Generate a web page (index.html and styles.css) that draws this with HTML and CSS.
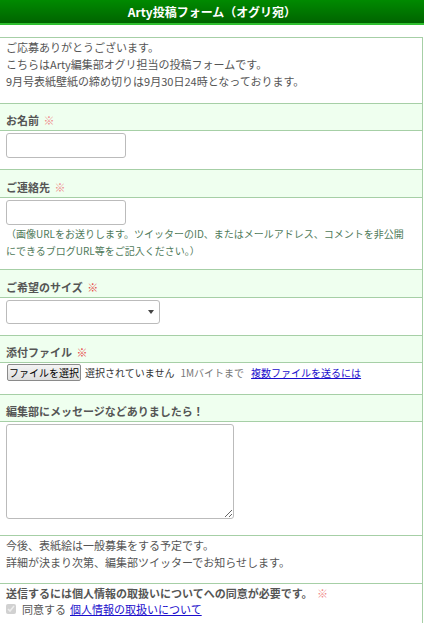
FILE: index.html
```html
<!DOCTYPE html>
<html lang="ja">
<head>
<meta charset="utf-8">
<title>Arty投稿フォーム（オグリ宛）</title>
<link rel="stylesheet" href="styles.css">
</head>
<body>
<h1 class="title">Arty投稿フォーム（オグリ宛）</h1>
<form class="form">
  <div class="cell intro">
    ご応募ありがとうございます。<br>
    こちらはArty編集部オグリ担当の投稿フォームです。<br>
    9月号表紙壁紙の締め切りは9月30日24時となっております。
  </div>
  <div class="cell label">お名前 <span class="req">※</span></div>
  <div class="cell field f-name"><input class="text" type="text"></div>
  <div class="cell label label-tall">ご連絡先 <span class="req">※</span></div>
  <div class="cell field f-contact">
    <input class="text" type="text">
    <p class="note">（画像URLをお送りします。ツイッターのID、またはメールアドレス、コメントを非公開にできるブログURL等をご記入ください。）</p>
  </div>
  <div class="cell label label-tall">ご希望のサイズ <span class="req req-strong">※</span></div>
  <div class="cell field f-size">
    <div class="select-wrap"><select class="select"><option></option></select></div>
  </div>
  <div class="cell label">添付ファイル <span class="req req-strong">※</span></div>
  <div class="cell field file-row">
    <button type="button" class="filebtn">ファイルを選択</button>
    <span class="nofile">選択されていません</span>
    <span class="limit">1Mバイトまで</span>
    <a class="link small" href="#">複数ファイルを送るには</a>
  </div>
  <div class="cell label">編集部にメッセージなどありましたら！</div>
  <div class="cell field area-row"><textarea class="area"></textarea></div>
  <div class="cell info">
    今後、表紙絵は一般募集をする予定です。<br>
    詳細が決まり次第、編集部ツイッターでお知らせします。
  </div>
  <div class="cell agree">
    <div class="agree-title">送信するには個人情報の取扱いについてへの同意が必要です。 <span class="req">※</span></div>
    <label class="agree-line"><input type="checkbox" class="check" checked disabled> 同意する <a class="link" href="#">個人情報の取扱いについて</a></label>
  </div>
</form>
</body>
</html>
```
FILE: styles.css
```css
html, body {
  margin: 0;
  padding: 0;
  background: #fff;
}
body {
  font-family: "Noto Sans CJK JP", "Noto Sans", sans-serif;
  font-size: 11px;
  color: #555;
  overflow: hidden;
}
.title {
  margin: 0 0 12px -2px;
  width: 424px;
  height: 23px;
  line-height: 23px;
  background: linear-gradient(#008a00, #006400);
  border: 2px solid #2fbf2f;
  border-top: 0;
  border-right-width: 1px;
  color: #fff;
  font-size: 12px;
  font-weight: bold;
  text-align: center;
  box-sizing: content-box;
}
.form {
  display: flex;
  flex-direction: column;
  width: 424px;
  margin-left: -1px;
  box-sizing: border-box;
  border: 1px solid #a6cfa6;
  border-bottom: 0;
}
.cell {
  border-top: 1px solid #a6cfa6;
  padding: 1px 5px 0 6px;
  line-height: 17px;
  box-sizing: border-box;
  flex: none;
}
.cell:first-child {
  border-top: 0;
}
.intro {
  height: 65px;
}
.label {
  background: #efffef;
  font-weight: bold;
  height: 27px;
  padding-top: 8px;
}
.label-tall {
  height: 28px;
  padding-top: 9px;
}
.req {
  color: #f08a8a;
  font-weight: normal;
  font-size: 11px;
  margin-left: 2px;
}
.req-strong {
  color: #e84a4a;
}
.field {
  padding-top: 2px;
}
.f-name {
  height: 39px;
}
.f-contact {
  height: 72px;
}
.f-size {
  height: 38px;
}
.text {
  display: block;
  width: 120px;
  height: 25px;
  box-sizing: border-box;
  margin: 0;
  border: 1px solid #bbb;
  border-radius: 3px;
  background: #fff;
}
.note {
  margin: 0;
  padding-right: 6px;
  color: #4f7a5a;
  font-size: 10px;
  line-height: 17px;
}
.select-wrap {
  position: relative;
  width: 154px;
  height: 24px;
}
.select {
  appearance: none;
  -webkit-appearance: none;
  display: block;
  width: 154px;
  height: 24px;
  margin: 0;
  border: 1px solid #bbb;
  border-radius: 3px;
  background: #fff;
}
.select-wrap::after {
  content: "";
  position: absolute;
  right: 6px;
  top: 10px;
  border-left: 3px solid transparent;
  border-right: 3px solid transparent;
  border-top: 4px solid #444;
}
.file-row {
  display: flex;
  align-items: flex-start;
  gap: 4px;
  padding-top: 1px;
  padding-left: 7px;
  height: 32px;
}
.filebtn {
  font-family: "Noto Sans CJK JP", sans-serif;
  font-size: 10px;
  width: 74px;
  height: 17px;
  line-height: 13px;
  padding: 0;
  margin: 0;
  color: #000;
  background: linear-gradient(#f4f4f4, #dedede);
  border: 1px solid #8a8a8a;
  border-radius: 2px;
}
.nofile {
  color: #333;
  font-size: 10px;
}
.limit {
  color: #777;
  font-size: 10px;
  margin-left: 2px;
}
.link {
  color: #1a0dcc;
  text-decoration: underline;
}
.small {
  font-size: 10px;
  margin-left: 3px;
}
.area-row {
  height: 114px;
}
.area {
  display: block;
  width: 228px;
  height: 95px;
  box-sizing: border-box;
  margin: 0;
  border: 1px solid #bbb;
  border-radius: 3px;
  resize: both;
}
.info {
  height: 48px;
}
.agree {
  padding-top: 1px;
  padding-bottom: 10px;
}
.agree-title {
  font-weight: bold;
  line-height: 17px;
}
.agree-line {
  display: flex;
  align-items: center;
  gap: 4px;
  line-height: 14px;
}
.check {
  width: 10px;
  height: 10px;
  margin: 0 2px 0 0;
}
```
